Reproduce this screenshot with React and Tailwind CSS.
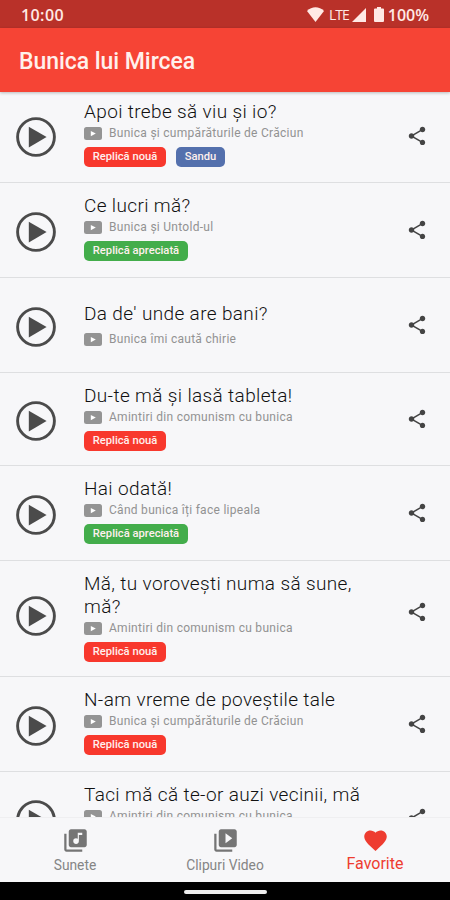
import React, { useState } from 'react';
import clsx from 'clsx';
import {
  MdFavorite,
  MdLibraryMusic,
  MdShare,
  MdVideoLibrary,
} from 'react-icons/md';

const TAGS = {
  new: { label: 'Replică nouă', style: 'bg-[#f8382d] w-[82px]' },
  liked: { label: 'Replică apreciată', style: 'bg-[#43ad4b] w-[104px]' },
  sandu: { label: 'Sandu', style: 'bg-[#5470ad] w-[49px]' },
};

const sounds = [
  { id: 1, title: 'Apoi trebe să viu și io?', video: 'Bunica și cumpărăturile de Crăciun', tags: ['new', 'sandu'], height: 'h-[94px]' },
  { id: 2, title: 'Ce lucri mă?', video: 'Bunica și Untold-ul', tags: ['liked'], height: 'h-[95px]' },
  { id: 3, title: "Da de' unde are bani?", video: 'Bunica îmi caută chirie', tags: [], height: 'h-[95px]' },
  { id: 4, title: 'Du-te mă și lasă tableta!', video: 'Amintiri din comunism cu bunica', tags: ['new'], height: 'h-[93px]' },
  { id: 5, title: 'Hai odată!', video: 'Când bunica îți face lipeala', tags: ['liked'], height: 'h-[95px]' },
  { id: 6, title: 'Mă, tu vorovești numa să sune, mă?', video: 'Amintiri din comunism cu bunica', tags: ['new'], height: 'h-[116px]', tall: true },
  { id: 7, title: 'N-am vreme de poveștile tale', video: 'Bunica și cumpărăturile de Crăciun', tags: ['new'], height: 'h-[95px]' },
  { id: 8, title: 'Taci mă că te-or auzi vecinii, mă', video: 'Amintiri din comunism cu bunica', tags: ['new'], height: 'h-[93px]' },
];

const tabs = [
  { id: 'sounds', label: 'Sunete', Icon: MdLibraryMusic },
  { id: 'clips', label: 'Clipuri Video', Icon: MdVideoLibrary },
  { id: 'favorites', label: 'Favorite', Icon: MdFavorite },
];

const StatusBar = () => (
  <div className="flex h-7 shrink-0 items-center bg-[#b93129] pl-[21px] pr-[21px] pt-[2px] font-['Open_Sans',sans-serif] text-[16px] font-semibold leading-none text-[#ffe9e5]">
    <span className="flex-1 tracking-[0.4px]">10:00</span>
    <svg className="-mt-[2px] mr-[5px] h-[15px] w-[17px]" viewBox="0 0 17 15" fill="currentColor">
      <path d="M0 4C4.8-.9 12.2-.9 17 4L8.5 15Z" />
    </svg>
    <span className="mr-[3px] text-[14px] font-normal tracking-[-1px]">LTE</span>
    <svg className="-mt-[1px] mr-[8px] h-[14px] w-[14px]" viewBox="0 0 14 14" fill="currentColor">
      <path d="M14 0v14H0Z" />
    </svg>
    <svg className="-mt-[2px] mr-[4px] h-[15px] w-[10px]" viewBox="0 0 10 15" fill="currentColor">
      <path d="M3 0h4v1.6h2q1 0 1 1V14q0 1-1 1H1q-1 0-1-1V2.6q0-1 1-1h2Z" />
    </svg>
    <span>100%</span>
  </div>
);

const PlayIcon = () => (
  <svg className="h-10 w-10" viewBox="0 0 40 40">
    <circle cx="20" cy="20" r="18.4" fill="none" stroke="#4b4b4b" strokeWidth="2.9" />
    <path d="M12.8 9.8 30.6 20 12.8 30.5Z" fill="#4b4b4b" />
  </svg>
);

const VideoIcon = () => (
  <svg className="h-[13px] w-[18px] shrink-0" viewBox="0 0 18 13">
    <rect width="18" height="13" rx="2.5" fill="#949494" />
    <path d="M6.8 4v5.2l5-2.6Z" fill="#fff" />
  </svg>
);

const SoundRow = ({ sound }) => (
  <li className={clsx('flex shrink-0 items-center border-b border-[#dedfe1]', sound.height)}>
    <button type="button" className={clsx('ml-4 shrink-0', sound.tall ? '-mt-[5px]' : 'mt-[3px]')}>
      <PlayIcon />
    </button>
    <div className={clsx('ml-7 w-[300px]', sound.tags.length > 0 && 'self-start pt-[11px]')}>
      <h2 className="text-[19px] font-light leading-[23px] tracking-[0.36px] text-[#111]">{sound.title}</h2>
      <div className={clsx('flex h-[18px] items-center', sound.tags.length === 0 ? 'mt-[5px]' : 'mt-px')}>
        <VideoIcon />
        <span className="ml-[7px] text-[12px] tracking-[0.28px] text-[#929292]">{sound.video}</span>
      </div>
      {sound.tags.length > 0 && (
        <div className="mt-[5px] flex gap-[10px]">
          {sound.tags.map((tag) => (
            <span
              key={tag}
              className={clsx('flex h-5 items-center justify-center rounded-[5px] text-[11.2px] font-medium text-[#fff0ee]', TAGS[tag].style)}
            >
              {TAGS[tag].label}
            </span>
          ))}
        </div>
      )}
    </div>
    <button type="button" className={clsx('ml-[22px] shrink-0 text-[#444]', sound.tall && '-mt-[13px]')}>
      <MdShare className="h-[22px] w-[22px]" />
    </button>
  </li>
);

export default function App() {
  const [tab, setTab] = useState('favorites');

  return (
    <div className="flex h-[900px] w-[450px] flex-col overflow-hidden bg-[#f7f7f9] font-[Roboto,sans-serif]">
      <StatusBar />
      <header className="z-10 flex h-16 shrink-0 items-center bg-[#f64435] pl-[19px] pt-[4px] shadow-[0_1px_3px_rgba(0,0,0,0.25)]">
        <h1 className="text-[23px] font-medium tracking-[-0.05px] text-[#fff0ec]">Bunica lui Mircea</h1>
      </header>

      {/* list is scrolled a few pixels under the header */}
      <ul className="-mt-[3px] flex min-h-0 flex-1 flex-col overflow-hidden">
        {sounds.map((sound) => (
          <SoundRow key={sound.id} sound={sound} />
        ))}
      </ul>

      <nav className="grid h-[65px] shrink-0 grid-cols-3 border-t border-[#efeff1] bg-[#f7f7f9]">
        {tabs.map(({ id, label, Icon }) => (
          <button
            key={id}
            type="button"
            onClick={() => setTab(id)}
            className={clsx(
              'flex flex-col items-center pt-[9px]',
              tab === id ? 'text-[#ee3c30]' : 'text-[#757575]'
            )}
          >
            <Icon className="h-[27px] w-[27px]" />
            <span className={clsx(tab === id ? 'text-[16px] leading-[20px]' : 'text-[13.8px] leading-[23px] text-[#858585]')}>
              {label}
            </span>
          </button>
        ))}
      </nav>

      {/* gesture bar */}
      <div className="flex h-[18px] shrink-0 justify-center bg-black pt-[8px]">
        <div className="h-[4px] w-[83px] rounded-full bg-[#eee]" />
      </div>
    </div>
  );
}
